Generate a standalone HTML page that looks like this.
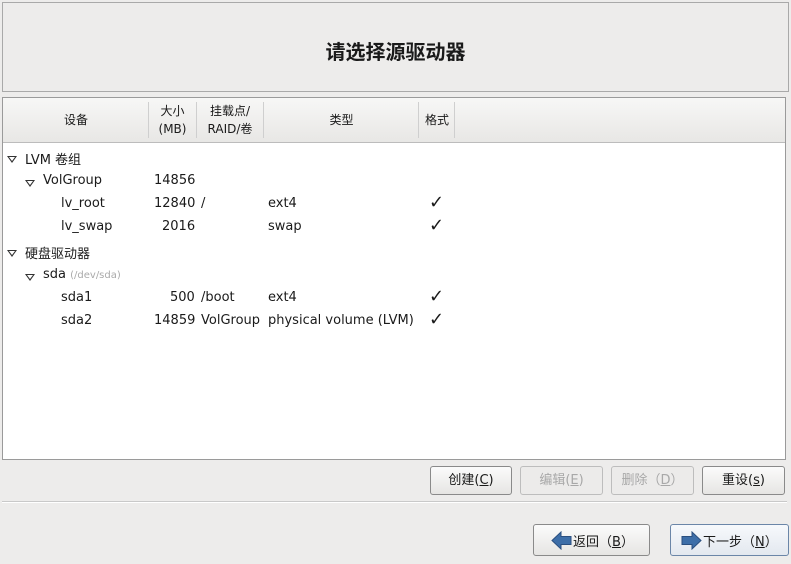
<!DOCTYPE html><html><head><meta charset="utf-8"><style>
body{margin:0;width:791px;height:564px;background:#edeceb;font-family:"DejaVu Sans","Noto Sans CJK SC",sans-serif;font-size:13px;color:#1a1a1a;position:relative;overflow:hidden}
.a{position:absolute}
.banner{left:2px;top:2px;width:785px;height:88px;border:1px solid #a9a9a9;background:#edeceb}
.title{left:0;width:791px;top:36px;text-align:center;font-size:20px;font-weight:bold;font-family:"Noto Sans CJK SC",sans-serif}
.tbl{left:2px;top:97px;width:782px;height:361px;border:1px solid #9a9a9a;background:#fff}
.hdr{left:0;top:0;width:782px;height:44px;background:linear-gradient(#f7f7f6,#e8e7e5);border-bottom:1px solid #bcbcbc}
.sep{top:4px;width:1px;height:36px;background:#cfcfcf}
.hc{font-size:12px;text-align:center;line-height:18px}
.r{position:absolute;white-space:nowrap}
.btn{border:1px solid #8a8a8a;border-radius:3px;background:linear-gradient(#fbfbfb,#e6e5e3);text-align:center;font-size:13px;box-sizing:border-box}
.dis{color:#a8a8a8;border-color:#bdbdbd;background:#ecebea}
.ck{font-size:18px}
.tri{position:absolute;width:0;height:0;border-left:5px solid transparent;border-right:5px solid transparent;border-top:7px solid #333}
.tri::after{content:"";position:absolute;left:-3px;top:-6px;border-left:3px solid transparent;border-right:3px solid transparent;border-top:4px solid #fff}
</style></head><body>
<div class="a banner"></div>
<div class="a title">请选择源驱动器</div>
<div class="a tbl">
 <div class="a hdr">
  <div class="a hc" style="left:0;width:146px;top:13px">设备</div>
  <div class="a sep" style="left:145px"></div>
  <div class="a hc" style="left:146px;width:47px;top:4px">大小<br>(MB)</div>
  <div class="a sep" style="left:193px"></div>
  <div class="a hc" style="left:194px;width:66px;top:4px">挂载点/<br>RAID/卷</div>
  <div class="a sep" style="left:260px"></div>
  <div class="a hc" style="left:261px;width:155px;top:13px">类型</div>
  <div class="a sep" style="left:415px"></div>
  <div class="a hc" style="left:416px;width:36px;top:13px">格式</div>
  <div class="a sep" style="left:451px"></div>
 </div>
 <span class="tri" style="left:4px;top:58px"></span><div class="r" style="left:22px;top:51px">LVM 卷组</div>
 <span class="tri" style="left:22px;top:82px"></span><div class="r" style="left:40px;top:75px">VolGroup</div>
 <div class="r" style="left:151px;top:75px">14856</div>
 <div class="r" style="left:58px;top:98px">lv_root</div>
 <div class="r" style="left:151px;top:98px">12840</div>
 <div class="r" style="left:198px;top:98px">/</div>
 <div class="r" style="left:265px;top:98px">ext4</div>
 <div class="r ck" style="left:426px;top:94px">✓</div>
 <div class="r" style="left:58px;top:121px">lv_swap</div>
 <div class="r" style="left:159px;top:121px">2016</div>
 <div class="r" style="left:265px;top:121px">swap</div>
 <div class="r ck" style="left:426px;top:117px">✓</div>
 <span class="tri" style="left:4px;top:152px"></span><div class="r" style="left:22px;top:145px">硬盘驱动器</div>
 <span class="tri" style="left:22px;top:176px"></span><div class="r" style="left:40px;top:169px">sda <span style="color:#aaa;font-size:10px">(/dev/sda)</span></div>
 <div class="r" style="left:58px;top:192px">sda1</div>
 <div class="r" style="left:167px;top:192px">500</div>
 <div class="r" style="left:198px;top:192px">/boot</div>
 <div class="r" style="left:265px;top:192px">ext4</div>
 <div class="r ck" style="left:426px;top:188px">✓</div>
 <div class="r" style="left:58px;top:215px">sda2</div>
 <div class="r" style="left:151px;top:215px">14859</div>
 <div class="r" style="left:198px;top:215px">VolGroup</div>
 <div class="r" style="left:265px;top:215px">physical volume (LVM)</div>
 <div class="r ck" style="left:426px;top:211px">✓</div>
</div>
<div class="a btn" style="left:430px;top:466px;width:82px;height:29px;line-height:27px">创建(<u>C</u>)</div>
<div class="a btn dis" style="left:520px;top:466px;width:83px;height:29px;line-height:27px">编辑(<u>E</u>)</div>
<div class="a btn dis" style="left:611px;top:466px;width:83px;height:29px;line-height:27px">删除（<u>D</u>）</div>
<div class="a btn" style="left:702px;top:466px;width:83px;height:29px;line-height:27px">重设(<u>s</u>)</div>
<div class="a" style="left:2px;top:501px;width:785px;height:1px;background:#c9c9c9"></div>
<div class="a" style="left:2px;top:502px;width:785px;height:1px;background:#fff"></div>
<div class="a btn" style="left:533px;top:524px;width:117px;height:32px">
 <svg class="a" style="left:17px;top:6px" width="21" height="19" viewBox="0 0 21 19"><path d="M1 9.5 L10 1 V5.5 H20 V13.5 H10 V18 Z" fill="#3d6ea8" stroke="#2a4f80"/></svg><span class="a" style="left:39px;top:6px">返回（<u>B</u>）</span></div>
<div class="a btn" style="left:670px;top:524px;width:119px;height:32px;border-color:#6b86a8;background:linear-gradient(#f7f9fc,#e3e8ef)">
 <svg class="a" style="left:10px;top:6px" width="21" height="19" viewBox="0 0 21 19"><path d="M20 9.5 L11 1 V5.5 H1 V13.5 H11 V18 Z" fill="#3d6ea8" stroke="#2a4f80"/></svg><span class="a" style="left:32px;top:6px">下一步（<u>N</u>）</span></div>
</body></html>
